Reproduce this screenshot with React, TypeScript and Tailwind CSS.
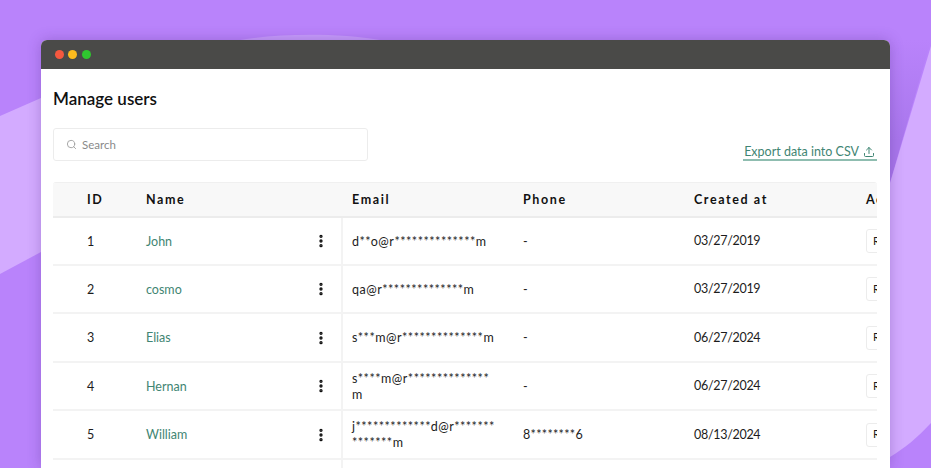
import { MoreVertical, Search, Upload } from 'lucide-react'

const users = [
  { id: 1, name: 'John', email: 'd**o@r**************m', phone: '-', created: '03/27/2019', h: 'h-[48px]' },
  { id: 2, name: 'cosmo', email: 'qa@r**************m', phone: '-', created: '03/27/2019', h: 'h-[48px]' },
  { id: 3, name: 'Elias', email: 's***m@r**************m', phone: '-', created: '06/27/2024', h: 'h-[49px]' },
  { id: 4, name: 'Hernan', email: 's****m@r**************\nm', phone: '-', created: '06/27/2024', h: 'h-[48px]' },
  { id: 5, name: 'William', email: 'j*************d@r*******\n*******m', phone: '8********6', created: '08/13/2024', h: 'h-[49px]' },
  { id: 6, name: '', email: '', phone: '', created: '', h: 'h-[48px]' },
]

const grid = 'grid grid-cols-[83px_207px_170px_171px_172px_60px]'

function Row({ user }: { user: (typeof users)[number] }) {
  return (
    <div className={`${grid} ${user.h} border-b-2 border-[#f3f3f3] text-[12.5px] text-[#1c1c1c]`}>
      <div className="flex items-center pl-[34px] pt-[2px]">{user.id}</div>
      <div className="flex items-center justify-between pl-[10px] pr-[12px] border-r-2 border-[#f3f3f3]">
        <span className="pt-[2px] text-[#3f8573]">{user.name}</span>
        {user.name && <MoreVertical className="h-[16px] w-[16px] text-[#111]" strokeWidth={3} />}
      </div>
      <div className="flex items-center pl-[9px] pt-[1px] leading-[16px] tracking-[0.5px] whitespace-pre-line">
        {user.email}
      </div>
      <div className="flex items-center pl-[10px] pt-[2px] tracking-[0.3px]">{user.phone}</div>
      <div className="flex items-center pl-[10px] pt-[1px] tracking-[-0.3px]">{user.created}</div>
      <div className="flex items-center pl-[10px]">
        {user.name && (
          <div className="flex h-[24px] w-[40px] items-center rounded-[3px] border border-[#ececec] pl-[6px] text-[11px]">
            R
          </div>
        )}
      </div>
    </div>
  )
}

export default function App() {
  return (
    <div className="relative h-[468px] w-[931px] overflow-hidden bg-[#b983fb] font-['Lato','Liberation_Sans',sans-serif]">
      {/* background shapes */}
      <svg className="absolute inset-0" width="931" height="468" viewBox="0 0 931 468">
        <defs>
          <linearGradient id="fade" x1="0" y1="0" x2="0" y2="1">
            <stop offset="0" stopColor="#b983fb" />
            <stop offset="0.7" stopColor="#a977ec" />
          </linearGradient>
        </defs>
        <path d="M0 116 L41 98 L41 252 L0 274 Z" fill="#d3abff" />
        <path d="M890 40 L931 40 L890 183 Z" fill="url(#fade)" />
        <path d="M890 183 L931 46 L931 423 C918 437 905 448 890 457 Z" fill="#d3abff" />
        <path d="M240 40 C280 33 340 33 380 40 Z" fill="#c79cfc" />
      </svg>

      <div className="relative ml-[41px] mt-[40px] w-[849px] overflow-hidden rounded-t-[6px] bg-white shadow-[0_0_14px_rgba(70,30,120,0.28)]">
        {/* title bar */}
        <div className="flex h-[29px] items-center gap-[4.5px] bg-[#4a4a48] pl-[13.5px]">
          <span className="h-[9px] w-[9px] rounded-full bg-[#f5583f]" />
          <span className="h-[9px] w-[9px] rounded-full bg-[#fdbb1e]" />
          <span className="h-[9px] w-[9px] rounded-full bg-[#2fc72f]" />
        </div>

        <div className="h-[399px] overflow-hidden pl-[12px] pr-[13px]">
          <h1 className="mt-[20px] text-[17px] leading-[20px] font-semibold text-[#111]">Manage users</h1>

          <div className="mt-[19px] flex items-end justify-between">
            <div className="flex h-[33px] w-[315px] items-center gap-[5px] rounded-[3px] border border-[#ececec] pl-[12px]">
              <Search className="h-[11px] w-[11px] text-[#a0a0a0]" />
              <span className="text-[11.5px] text-[#8a8a8a]">Search</span>
            </div>
            <div className="flex h-[20px] items-end gap-[4px] border-b-2 border-[#8fbdb0] pl-[1px] pr-[2px] text-[12.5px] leading-[15px] text-[#3f8573]">
              Export data into CSV
              <Upload className="mb-[1px] h-[12px] w-[12px]" />
            </div>
          </div>

          {/* users table */}
          <div className="mt-[21px] overflow-hidden rounded-t-[3px] border-t border-[#f0f0f0]">
            <div className={`${grid} h-[35px] border-b-2 border-[#ececec] bg-[#f8f8f8] text-[12.5px] font-bold tracking-[1.6px] text-[#111]`}>
              <div className="flex items-center pl-[34px] pt-[1px]">ID</div>
              <div className="flex items-center pl-[10px] pt-[1px]">Name</div>
              <div className="flex items-center pl-[9px] pt-[1px]">Email</div>
              <div className="flex items-center pl-[10px] pt-[1px]">Phone</div>
              <div className="flex items-center pl-[10px] pt-[1px]">Created at</div>
              <div className="flex items-center pl-[10px] pt-[1px]">Actions</div>
            </div>
            {users.map((user) => (
              <Row key={user.id} user={user} />
            ))}
          </div>
        </div>
      </div>
    </div>
  )
}
